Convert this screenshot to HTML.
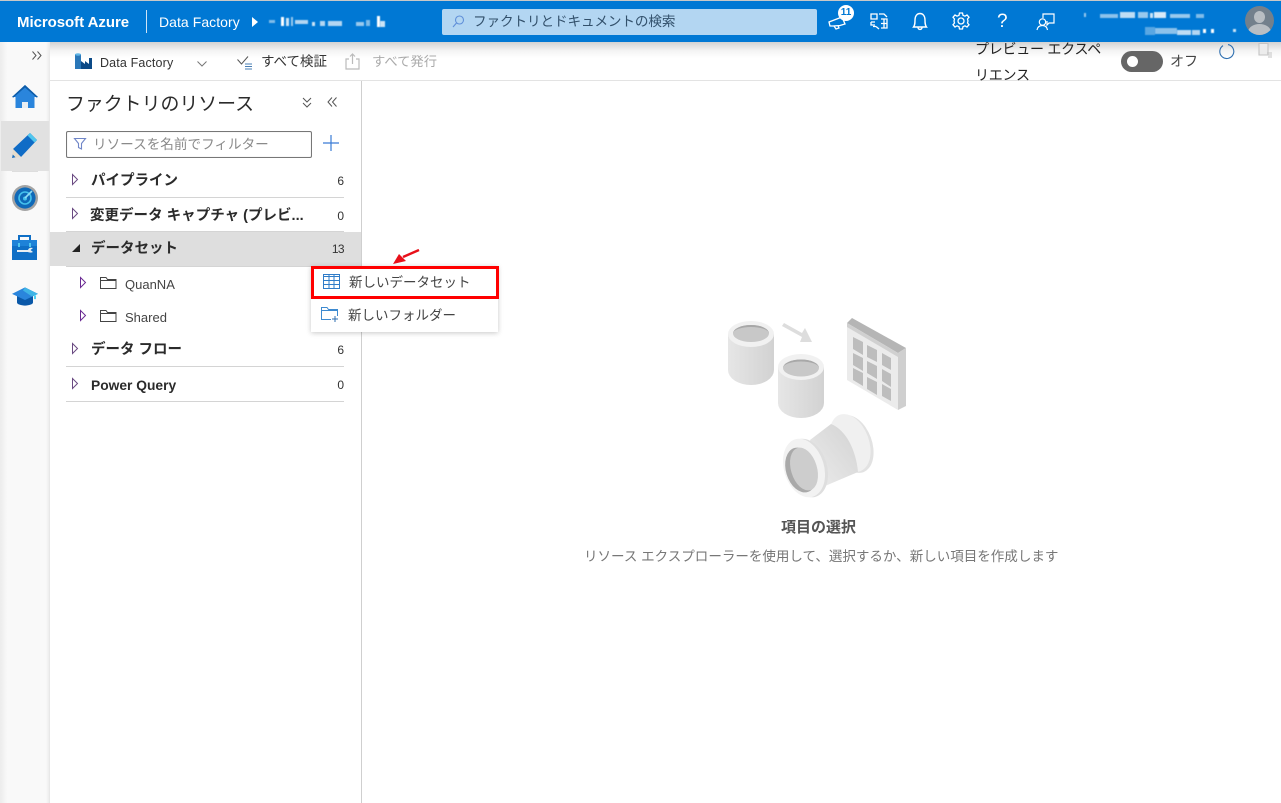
<!DOCTYPE html>
<html lang="ja"><head><meta charset="utf-8"><title>Azure Data Factory</title>
<style>
html,body{margin:0;padding:0;background:#fff}
body{width:1281px;height:803px;overflow:hidden;position:relative;font-family:"Liberation Sans","Noto Sans CJK JP",sans-serif;color:#333}
.a{position:absolute;white-space:nowrap;line-height:1}
svg{position:absolute;overflow:visible}
.hr{position:absolute;left:66px;width:278px;height:1px;background:#d4d4d4}
.b{font-weight:700;font-size:14.500px;color:#2b2b2b}
.n{font-size:12px;color:#333;text-align:right;width:30px;left:314px}
.w{position:absolute;background:#fff;filter:blur(.6px)}
</style></head><body>
<div class="a" style="left:0;top:0;width:1281px;height:1px;background:#c8c8c8"></div>
<div class="a" style="left:0;top:1px;width:1281px;height:41px;background:#0078d4"></div>
<div class="a" style="left:17px;top:15px;font-size:15px;font-weight:700;color:#fff;letter-spacing:-.05px">Microsoft Azure</div>
<div class="a" style="left:146px;top:10px;width:1px;height:23px;background:#cfe4f6"></div>
<div class="a" style="left:159px;top:15px;font-size:14px;color:#fff;letter-spacing:.05px">Data Factory</div>
<svg style="left:252px;top:17px" width="6" height="10"><path d="M0 0L6 5L0 10Z" fill="#fff"/></svg>
<div class="w" style="left:269px;top:20px;width:6px;height:3px;opacity:.5"></div><div class="w" style="left:281px;top:17px;width:3px;height:9px"></div><div class="w" style="left:286px;top:18px;width:3px;height:8px;opacity:.8"></div><div class="w" style="left:291px;top:17px;width:2px;height:9px;opacity:.6"></div><div class="w" style="left:295px;top:20px;width:13px;height:4px;opacity:.7"></div><div class="w" style="left:312px;top:22px;width:3px;height:4px;opacity:.8"></div><div class="w" style="left:320px;top:21px;width:5px;height:5px;opacity:.7"></div><div class="w" style="left:328px;top:21px;width:14px;height:5px;opacity:.7"></div><div class="w" style="left:356px;top:22px;width:8px;height:4px;opacity:.6"></div><div class="w" style="left:366px;top:20px;width:4px;height:6px;opacity:.5"></div><div class="w" style="left:377px;top:16px;width:3px;height:11px"></div><div class="w" style="left:380px;top:21px;width:5px;height:6px;opacity:.8"></div>

<div class="a" style="left:442px;top:9px;width:375px;height:26px;background:#b3d6f2;border-radius:2px"></div>
<svg style="left:451px;top:14px" width="16" height="16" fill="none" stroke="#5f8fd9" stroke-width="1.100"><circle cx="8.500" cy="6" r="4"/><path d="M5.500 9L2 13"/></svg>
<div class="a" style="left:473px;top:15px;font-size:13.600px;color:#32506b;letter-spacing:-.1px">ファクトリとドキュメントの検索</div>

<svg style="left:828px;top:5px" width="34" height="26" fill="none" stroke="#fff" stroke-width="1.300"><path d="M1 17L14 12L17 19L12 20.500L5 21L2 21Z"/><path d="M6 21L8 24L11 23L10 20.500"/></svg>
<div class="a" style="left:838px;top:5px;width:16px;height:16px;line-height:16px;border-radius:50%;background:#fff;color:#0078d4;font-size:10px;font-weight:700;text-align:center">11</div>
<svg style="left:870px;top:13px" width="18" height="17" fill="none" stroke="#fff" stroke-width="1.300"><path d="M1 1H7V6H1ZM1 9H5M1 9V12H5M11 15H17V6H11M11 10.500H17M14 6V15M9 1H14L17 4M9 16L6 13.500M6 13.500H3"/></svg>
<svg style="left:912px;top:12px" width="16" height="19" fill="none" stroke="#fff" stroke-width="1.400"><path d="M1.500 15C3 13 3 11 3 8C3 4 5 1.500 8 1.500C11 1.500 13 4 13 8C13 11 13 13 14.500 15Z"/><path d="M6 15.500C6 18 10 18 10 15.500"/></svg>
<svg style="left:952px;top:12px" width="18" height="18" viewBox="0 0 18 18" fill="none" stroke="#fff" stroke-width="1.300"><path d="M7.500 1H10.500L11 3.300L13 4.200L15 3L17 5.300L15.500 7L16 9L15.500 11L17 12.700L15 15L13 13.800L11 14.700L10.500 17H7.500L7 14.700L5 13.800L3 15L1 12.700L2.500 11L2 9L2.500 7L1 5.300L3 3L5 4.200L7 3.300Z"/><circle cx="9" cy="9" r="3"/></svg>
<div class="a" style="left:997px;top:12px;font-size:19px;color:#fff">?</div>
<svg style="left:1036px;top:13px" width="20" height="18" fill="none" stroke="#fff" stroke-width="1.200"><path d="M7 5V1H18V10H13L11 12V8"/><circle cx="6.500" cy="9" r="3.200"/><path d="M1 17C1.500 14 3.500 12.500 6.500 12.500C9 12.500 11 14 11.500 17"/></svg>

<div class="w" style="left:1084px;top:13px;width:2px;height:4px;opacity:.6"></div><div class="w" style="left:1100px;top:14px;width:18px;height:4px;opacity:.55"></div><div class="w" style="left:1120px;top:12px;width:15px;height:6px;opacity:.75"></div><div class="w" style="left:1138px;top:12px;width:10px;height:6px;opacity:.6"></div><div class="w" style="left:1150px;top:13px;width:3px;height:5px;opacity:.8"></div><div class="w" style="left:1154px;top:12px;width:12px;height:6px;opacity:.85"></div><div class="w" style="left:1170px;top:14px;width:20px;height:4px;opacity:.6"></div><div class="w" style="left:1196px;top:14px;width:8px;height:4px;opacity:.5"></div><div class="w" style="left:1145px;top:27px;width:10px;height:8px;opacity:.35"></div><div class="w" style="left:1155px;top:28px;width:22px;height:6px;opacity:.55"></div><div class="w" style="left:1177px;top:30px;width:14px;height:5px;opacity:.75"></div><div class="w" style="left:1192px;top:30px;width:8px;height:5px;opacity:.7"></div><div class="w" style="left:1203px;top:29px;width:3px;height:4px"></div><div class="w" style="left:1211px;top:29px;width:3px;height:4px"></div><div class="w" style="left:1233px;top:29px;width:3px;height:3px;opacity:.8"></div>
<div class="a" style="left:1245px;top:6px;width:29px;height:29px;border-radius:50%;background:#73808c;overflow:hidden"><div class="a" style="left:9px;top:5px;width:11px;height:12px;border-radius:50%;background:#b9bec3"></div><div class="a" style="left:3px;top:18px;width:23px;height:16px;border-radius:50%;background:#b9bec3"></div></div>

<div class="a" style="left:0;top:42px;width:1281px;height:16px;background:linear-gradient(#d2d2d2,#f4f4f4 55%,#fff)"></div>
<div class="a" style="left:0;top:80px;width:1281px;height:1px;background:#e3e3e3"></div>
<div class="a" style="left:0;top:42px;width:50px;height:761px;background:linear-gradient(90deg,#ececec,#f9f9f9 15%,#f9f9f9 92%,#e9e9e9)"></div>
<div class="a" style="left:49px;top:81px;width:1px;height:722px;background:#e8e8e8"></div>
<svg style="left:32px;top:51px" width="10" height="9" fill="none" stroke="#555" stroke-width="1"><path d="M0.500 0.500L4 4.500L0.500 8.500M5.500 0.500L9 4.500L5.500 8.500"/></svg>

<svg style="left:75px;top:53px" width="17" height="17"><rect x="0" y="1" width="6" height="15" fill="#2a77b8"/><ellipse cx="3" cy="1.500" rx="3" ry="1.300" fill="#62b6e6"/><path d="M6 16V8L10 11V8L14 11V5H17V16Z" fill="#0c4a87"/></svg>
<div class="a" style="left:100px;top:57px;font-size:12.500px;color:#333;letter-spacing:.15px">Data Factory</div>
<svg style="left:197px;top:61px" width="10" height="6" fill="none" stroke="#777"><path d="M.5 .5L5 5L9.500 .5"/></svg>
<svg style="left:237px;top:56px" width="16" height="14" fill="none" stroke="#4a7fb5" stroke-width="1"><path d="M.5 3.500L4.500 8L11 .5" stroke="#555"/><path d="M8 8H15M8 10.500H15M8 13H15"/></svg>
<div class="a" style="left:261px;top:55px;font-size:13.500px;color:#333">すべて検証</div>
<svg style="left:345px;top:53px" width="15" height="17" fill="none" stroke="#bbb" stroke-width="1.200"><path d="M4 6H1V16H14V6H11M7.500 11V1M5 3.500L7.500 1L10 3.500"/></svg>
<div class="a" style="left:372px;top:55px;font-size:13.300px;color:#aaa">すべて発行</div>

<div class="a" style="left:975px;top:42px;font-size:14px;color:#222;letter-spacing:-.25px">プレビュー エクスペ</div>
<div class="a" style="left:975px;top:68px;font-size:14px;color:#222;letter-spacing:-.25px">リエンス</div>
<div class="a" style="left:1121px;top:51px;width:42px;height:21px;border-radius:11px;background:#666"></div>
<div class="a" style="left:1127px;top:56px;width:11px;height:11px;border-radius:50%;background:#fff"></div>
<div class="a" style="left:1170px;top:54px;font-size:14px;color:#444">オフ</div>
<svg style="left:1218px;top:43px" width="17" height="15" fill="none" stroke="#2f6fb0" stroke-width="1.100"><path d="M5 2.600A7 7 0 1 0 10 1.600"/></svg>
<svg style="left:1258px;top:43px" width="15" height="15" fill="#ececec" stroke="#c4c4c4" stroke-width="1.100"><path d="M1 .5H10V12H1Z"/><path d="M9 10H14M9 12H14M10 14H14" fill="none"/></svg>

<div class="a" style="left:1px;top:121px;width:48px;height:50px;background:#e1e1e1"></div>
<div class="a" style="left:12px;top:171px;width:26px;height:1px;background:#ddd"></div>
<svg style="left:12px;top:85px" width="26" height="24"><path d="M13 0L26 12H22.500V23H3.500V12H0Z" fill="#2a85dc"/><rect x="10" y="17" width="6" height="6" fill="#e9eef2"/><path d="M13 0L26 12L24.500 12.500L13 2.500L1.500 12.500L0 12Z" fill="#0e5ca8"/></svg>
<svg style="left:12px;top:133px" width="26" height="26"><path d="M18 0L25 7L9 24L1 16Z" fill="#0f6cc6"/><path d="M18 0L25 7L22.500 9.500L15.500 2.500Z" fill="#50c6ee"/><path d="M1 16L9 24L0 25Z" fill="#e6dccb"/><path d="M.8 21.500L3.500 24.300L0 25Z" fill="#1a6fc0"/></svg>
<svg style="left:12px;top:185px" width="26" height="26"><circle cx="13" cy="13" r="13" fill="#a3a3a3"/><circle cx="13" cy="13" r="10.600" fill="#0f69b8"/><circle cx="13" cy="13" r="6" fill="none" stroke="#45c1ec" stroke-width="1.600"/><circle cx="13" cy="13.500" r="2" fill="#45c1ec"/><path d="M13 13L20 6" stroke="#8fdcf5" stroke-width="1.600"/></svg>
<svg style="left:12px;top:234px" width="26" height="26"><rect x="0" y="6" width="25" height="20" fill="#0f6fc6"/><rect x="7" y="2" width="11" height="5" fill="none" stroke="#0f6fc6" stroke-width="2"/><rect x="0" y="6" width="25" height="6" fill="#1e82d8"/><rect x="6" y="9" width="2" height="4" fill="#50c6ee"/><rect x="17" y="9" width="2" height="4" fill="#50c6ee"/><path d="M5 16H16C17 13.500 19 13.500 21 14L18.500 16L21 18C19 19 17 18.500 16 18H5Z" fill="#e8eef2"/></svg>
<svg style="left:12px;top:287px" width="26" height="19" viewBox="0 0 26 22" preserveAspectRatio="none"><path d="M5 10H21V18C21 20 17 21.500 13 21.500C9 21.500 5 20 5 18Z" fill="#0a58a8"/><path d="M13 .5L26 8L13 15L0 8Z" fill="#2a85dc"/><path d="M13 .5L26 8L20 11L11 4Z" fill="#3fb4e6"/><path d="M22 9L24 10V14H22Z" fill="#50d0f0"/></svg>

<div class="a" style="left:361px;top:81px;width:1px;height:722px;background:#cfcfcf"></div>
<div class="a" style="left:66px;top:96px;font-size:18.900px;color:#2b2b2b">ファクトリのリソース</div>
<svg style="left:302px;top:97px" width="10" height="12" fill="none" stroke="#555" stroke-width="1"><path d="M1 1L5 5L9 1M1 6L5 10L9 6"/></svg>
<svg style="left:327px;top:97px" width="10" height="11" fill="none" stroke="#555" stroke-width="1"><path d="M5 .5L1 5L5 9.500M9.500 .5L5.500 5L9.500 9.500"/></svg>
<div class="a" style="left:66px;top:131px;width:244px;height:25px;border:1px solid #777;border-radius:2px;box-shadow:inset 0 0 1px #ccc"></div>
<svg style="left:74px;top:138px" width="12" height="12" fill="none" stroke="#7086c8" stroke-width="1.100"><path d="M.5 .5H11.500L7.500 5.500V11L4.500 9.500V5.500Z"/></svg>
<div class="a" style="left:93px;top:138px;font-size:13.600px;color:#8a8a8a">リソースを名前でフィルター</div>
<svg style="left:323px;top:135px" width="16" height="16" stroke="#3a7bd5" stroke-width="1.200"><path d="M8 0V16M0 8H16"/></svg>

<svg style="left:72px;top:174px" width="6" height="11" fill="none" stroke="#6a4a82" stroke-width="1"><path d="M.5 .5L5.500 5.500L.5 10.500Z"/></svg>
<div class="a b" style="left:91px;top:174px">パイプライン</div><div class="a n" style="top:175px">6</div><div class="hr" style="top:197px"></div>
<svg style="left:72px;top:208px" width="6" height="11" fill="none" stroke="#6a4a82" stroke-width="1"><path d="M.5 .5L5.500 5.500L.5 10.500Z"/></svg>
<div class="a b" style="left:90px;top:209px;letter-spacing:.02px">変更データ キャプチャ (プレビ...</div><div class="a n" style="top:210px">0</div>
<div class="a" style="left:50px;top:232px;width:311px;height:34px;background:#dedede"></div>
<div class="hr" style="top:231px"></div><div class="hr" style="top:266px"></div>
<svg style="left:72px;top:244px" width="8" height="8"><path d="M8 0V8H0Z" fill="#222"/></svg>
<div class="a b" style="left:91px;top:242px">データセット</div><div class="a n" style="top:243px;letter-spacing:-.6px">13</div>
<svg style="left:80px;top:277px" width="6" height="11" fill="none" stroke="#6a2a92" stroke-width="1"><path d="M.5 .5L5.500 5.500L.5 10.500Z"/></svg>
<svg style="left:100px;top:277px" width="17" height="12" fill="none" stroke="#444" stroke-width="1"><path d="M.5 11.500V.5H6L7.500 2.500H16V11.500Z"/><path d="M.5 3.500H16"/></svg>
<div class="a" style="left:125px;top:278px;font-size:13px;color:#444">QuanNA</div>
<svg style="left:80px;top:310px" width="6" height="11" fill="none" stroke="#6a2a92" stroke-width="1"><path d="M.5 .5L5.500 5.500L.5 10.500Z"/></svg>
<svg style="left:100px;top:310px" width="17" height="12" fill="none" stroke="#444" stroke-width="1"><path d="M.5 11.500V.5H6L7.500 2.500H16V11.500Z"/><path d="M.5 3.500H16"/></svg>
<div class="a" style="left:125px;top:311px;font-size:13px;color:#444">Shared</div>
<svg style="left:72px;top:343px" width="6" height="11" fill="none" stroke="#6a4a82" stroke-width="1"><path d="M.5 .5L5.500 5.500L.5 10.500Z"/></svg>
<div class="a b" style="left:91px;top:343px">データ フロー</div><div class="a n" style="top:344px">6</div><div class="hr" style="top:366px"></div>
<svg style="left:72px;top:378px" width="6" height="11" fill="none" stroke="#6a4a82" stroke-width="1"><path d="M.5 .5L5.500 5.500L.5 10.500Z"/></svg>
<div class="a b" style="left:91px;top:379px;font-size:13.800px">Power Query</div><div class="a n" style="top:379px">0</div><div class="hr" style="top:401px"></div>

<div class="a" style="left:311px;top:266px;width:187px;height:66px;background:#fff;box-shadow:0 1px 5px rgba(0,0,0,.22)"></div>
<div class="a" style="left:311px;top:266px;width:182px;height:27px;border:3px solid #f00"></div>
<svg style="left:393px;top:249px" width="27" height="17"><path d="M26 1L10 8" stroke="#e8101a" stroke-width="2.400"/><path d="M0 15L6 5L13 12Z" fill="#e8101a"/></svg>
<svg style="left:323px;top:274px" width="17" height="15" fill="none" stroke="#2f7cc8" stroke-width="1"><path d="M.5 .5H16.500V14.500H.5ZM.5 2.500H16.500M.5 6.500H16.500M.5 10.500H16.500M6 .5V14.500M11 .5V14.500"/></svg>
<div class="a" style="left:349px;top:276px;font-size:13.500px;color:#444">新しいデータセット</div>
<svg style="left:321px;top:307px" width="18" height="15" fill="none" stroke="#3d8ad0" stroke-width="1"><path d="M10 12.500H.5V.5H6L7.500 2.500H16.500V9"/><path d="M.5 3.500H16.500"/><path d="M14 9V15M11 12H17" stroke="#2f6fb0"/></svg>
<div class="a" style="left:348px;top:309px;font-size:13.500px;color:#444">新しいフォルダー</div>

<svg style="left:700px;top:300px" width="230" height="210">
<defs>
<linearGradient id="c" x1="0" x2="1" y1="0" y2="0"><stop offset="0" stop-color="#e6e6e6"/><stop offset="1" stop-color="#d2d2d2"/></linearGradient>
<linearGradient id="p" x1="0" x2="1" y1="1" y2="0"><stop offset="0" stop-color="#ececec"/><stop offset="1" stop-color="#d2d2d2"/></linearGradient>
</defs>
<path d="M28 34V70A23 15 0 0 0 74 70V34Z" fill="url(#c)"/><ellipse cx="51" cy="34" rx="23" ry="13" fill="#f1f1f1"/><ellipse cx="51" cy="33.500" rx="18" ry="8.500" fill="#c8c8c8"/><path d="M33 33.500A18 8.500 0 0 1 69 33.500A18 6.500 0 0 0 33 33.500" fill="#a8a8a8"/>
<path d="M78 67V103A23 15 0 0 0 124 103V67Z" fill="url(#c)"/><ellipse cx="101" cy="67" rx="23" ry="13" fill="#f1f1f1"/><ellipse cx="101" cy="68" rx="18" ry="8.500" fill="#c8c8c8"/><path d="M83 68A18 8.500 0 0 1 119 68A18 6.500 0 0 0 83 68" fill="#a8a8a8"/>
<path d="M82 26L84 23L102 33L105 28L112 42H100L102 37Z" fill="#ddd"/>
<path d="M147 25L198 53V110L147 80Z" fill="#ebebeb"/><path d="M147 23L152 18L206 48L198 53Z" fill="#b5b5b5"/><path d="M147 23L198 53V57L147 27Z" fill="#d0d0d0"/><path d="M198 110L206 106V48L198 53Z" fill="#cfcfcf"/>
<g fill="#bdbdbd"><path d="M153 37L163 42V55L153 49ZM167 45L177 50V62L167 57ZM182 53L191 58V70L182 65ZM153 53L163 58V71L153 65ZM167 61L177 66V79L167 73ZM182 69L191 74V87L182 81ZM153 68L163 73V86L153 80ZM167 77L177 82V95L167 89ZM182 84L191 89V101L182 96Z"/></g>
<ellipse cx="153" cy="144" rx="19" ry="30" fill="#e2e2e2" transform="rotate(-20 153 144)"/>
<ellipse cx="150" cy="143" rx="19" ry="30" fill="#f0f0f0" transform="rotate(-20 150 143)"/>
<path d="M110 140L131 124C146 130 156 150 158 172L125 186Z" fill="url(#p)"/>
<ellipse cx="107" cy="168" rx="20" ry="30" fill="#dedede" transform="rotate(-17 107 168)"/>
<ellipse cx="104" cy="168" rx="20" ry="30" fill="#f2f2f2" transform="rotate(-17 104 168)"/>
<ellipse cx="101" cy="170" rx="15" ry="23" fill="#a9a9a9" transform="rotate(-17 101 170)"/>
<ellipse cx="104" cy="169" rx="13" ry="22" fill="#cdcdcd" transform="rotate(-17 104 169)"/>
</svg>
<div class="a" style="left:781px;top:520px;font-size:15px;font-weight:700;color:#555">項目の選択</div>
<div class="a" style="left:584px;top:550px;font-size:13.530px;color:#777">リソース エクスプローラーを使用して、選択するか、新しい項目を作成します</div>
</body></html>
